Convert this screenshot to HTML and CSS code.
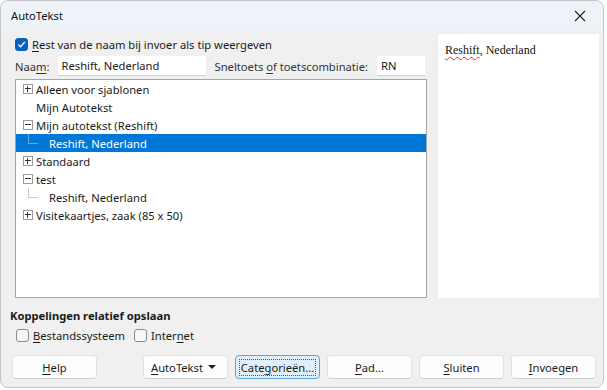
FILE: index.html
```html
<!DOCTYPE html>
<html lang="nl">
<head>
    <meta charset="UTF-8">
    <title>AutoTekst</title>
    <link rel="stylesheet" href="styles.css">
</head>
<body>

    <!-- Dialog window -->
    <div class="dialog">
        <div class="titlebar">
            <span class="title">AutoTekst</span>
            <svg class="close" width="12" height="12" viewBox="0 0 12 12">
                <path d="M1 1 L11 11 M11 1 L1 11" stroke="#222" stroke-width="1.1" fill="none"/>
            </svg>
        </div>

        <div class="main">
            <div class="left">
                <label class="check-row">
                    <span class="checkbox checked">
                        <svg width="9" height="9" viewBox="0 0 9 9"><path d="M1.2 4.6 L3.5 6.8 L7.8 2" stroke="#fff" stroke-width="1.3" fill="none"/></svg>
                    </span>
                    <span><u>R</u>est van de naam bij invoer als tip weergeven</span>
                </label>

                <div class="name-row">
                    <span class="lbl">Naa<u>m</u>:</span>
                    <div class="field name-field">Reshift, Nederland</div>
                    <span class="lbl shortcut-lbl">Sneltoets <u>o</u>f toetscombinatie:</span>
                    <div class="field key-field">RN</div>
                </div>

                <div class="tree">
                    <div class="node"><span class="expander plus"></span>Alleen voor sjablonen</div>
                    <div class="node"><span class="expander none"></span>Mijn Autotekst</div>
                    <div class="node"><span class="expander minus"></span>Mijn autotekst (Reshift)</div>
                    <div class="node child selected"><span class="branch"></span>Reshift, Nederland</div>
                    <div class="node"><span class="expander plus"></span>Standaard</div>
                    <div class="node"><span class="expander minus"></span>test</div>
                    <div class="node child"><span class="branch"></span>Reshift, Nederland</div>
                    <div class="node"><span class="expander plus"></span>Visitekaartjes, zaak (85 x 50)</div>
                </div>
            </div>

            <div class="preview">
                <span class="spell">Reshift</span>, Nederland
            </div>
        </div>

        <div class="links">
            <div class="section-title">Koppelingen relatief opslaan</div>
            <div class="links-row">
                <label class="check-row"><span class="checkbox"></span><span><u>B</u>estandssysteem</span></label>
                <label class="check-row"><span class="checkbox"></span><span>Inter<u>n</u>et</span></label>
            </div>
        </div>

        <div class="buttons">
            <button class="btn help"><u>H</u>elp</button>
            <button class="btn menu-btn"><span><u>A</u>utoTekst</span><span class="arrow"></span></button>
            <button class="btn focused"><span class="focus-ring">Cate<u>g</u>orieën...</span></button>
            <button class="btn"><u>P</u>ad...</button>
            <button class="btn"><u>S</u>luiten</button>
            <button class="btn"><u>I</u>nvoegen</button>
        </div>
    </div>

</body>
</html>
```

FILE: styles.css
```css
/* Reset */
* {
    margin: 0;
    padding: 0;
    box-sizing: border-box;
}

body {
    background: #fff;
    font-family: 'Noto Sans', 'Open Sans', sans-serif;
    font-size: 11.2px;
    color: #1a1a1a;
    width: 607px;
    height: 390px;
    overflow: hidden;
    white-space: nowrap;
}

u {
    text-decoration-thickness: 1px;
    text-underline-offset: 2px;
}

/* Window */
.dialog {
    width: 604px;
    height: 388px;
    background: #f0f0f0;
    border: 1px solid #c4c4c4;
    border-radius: 8px;
    overflow: hidden;
    display: flex;
    flex-direction: column;
}

.titlebar {
    height: 29px;
    flex-shrink: 0;
    background: #eef2f9;
    display: flex;
    align-items: center;
    justify-content: space-between;
    padding: 0 17px 0 10px;
}

.title {
    color: #111;
}

/* Top area */
.main {
    display: flex;
    padding: 4px 0 0 14px;
    gap: 11px;
}

.left {
    width: 412px;
    display: flex;
    flex-direction: column;
}

.check-row {
    display: flex;
    align-items: center;
    gap: 4px;
    height: 20px;
}

.checkbox {
    width: 13px;
    height: 13px;
    border: 1px solid #8a8a8a;
    border-radius: 3px;
    background: #f7f7f7;
    display: flex;
    align-items: center;
    justify-content: center;
    flex-shrink: 0;
}

.checkbox.checked {
    background: #0a5fc0;
    border-color: #0a5fc0;
}

.name-row {
    display: flex;
    align-items: center;
    height: 20px;
    margin-top: 2px;
}

.lbl {
    color: #333;
}

.field {
    background: #fff;
    height: 20px;
    line-height: 19px;
    padding: 0 4px;
    border-bottom: 1px solid #d6d6d6;
    color: #1a1a1a;
}

.name-field {
    width: 148px;
    margin-left: 8px;
}

.shortcut-lbl {
    margin-left: 9px;
}

.key-field {
    width: 48px;
    margin-left: 9px;
}

/* Tree */
.tree {
    margin-top: 3px;
    height: 219px;
    background: #fff;
    border: 1px solid #a6a6a6;
}

.node {
    height: 18px;
    display: flex;
    align-items: center;
    padding-left: 7px;
    color: #1a1a1a;
    position: relative;
}

.node.selected {
    background: #0078d7;
    color: #fff;
}

.expander {
    width: 10px;
    height: 10px;
    margin-right: 3px;
    border: 1px solid #9a9a9a;
    position: relative;
    flex-shrink: 0;
}

.expander.none {
    border-color: transparent;
}

.expander.plus::before,
.expander.minus::before {
    content: "";
    position: absolute;
    left: 1px;
    top: 3px;
    width: 6px;
    height: 1px;
    background: #333;
}

.expander.plus::after {
    content: "";
    position: absolute;
    left: 3px;
    top: 1px;
    width: 1px;
    height: 6px;
    background: #333;
}

.node.child {
    padding-left: 33px;
}

.branch {
    position: absolute;
    left: 12px;
    top: 0;
    width: 10px;
    height: 10px;
    border-left: 1px solid #c8c8c8;
    border-bottom: 1px solid #c8c8c8;
}

.selected .branch {
    border-color: #6aa8e0;
}

/* Preview */
.preview {
    width: 161px;
    height: 264px;
    background: #fff;
    font-family: 'Liberation Serif', serif;
    font-size: 12px;
    color: #111;
    padding: 9px 7px;
}

.spell {
    text-decoration: underline wavy #d33;
    text-decoration-thickness: 1px;
    text-underline-offset: 2px;
}

/* Links section */
.links {
    padding: 9px 0 0 9px;
}

.section-title {
    font-weight: bold;
    font-size: 11.2px;
    color: #1a1a1a;
    height: 18px;
    line-height: 18px;
}

.links-row {
    display: flex;
    gap: 9px;
    padding-left: 6px;
}

/* Buttons */
.buttons {
    display: flex;
    gap: 7px;
    padding: 0 0 0 11px;
    margin-top: 10px;
}

.btn {
    width: 85px;
    height: 24px;
    font-family: inherit;
    font-size: 11.2px;
    color: #1a1a1a;
    background: #fdfdfd;
    border: 1px solid #e2e2e2;
    border-bottom-color: #cfcfcf;
    border-radius: 4px;
    display: flex;
    align-items: center;
    justify-content: center;
}

.help {
    margin-right: 39px;
}

.menu-btn {
    justify-content: space-between;
    padding: 0 11px 0 7px;
}

.arrow {
    width: 0;
    height: 0;
    border-left: 4px solid transparent;
    border-right: 4px solid transparent;
    border-top: 4px solid #222;
}

.focused {
    background: #e1effa;
    border-color: #5fa3dc;
}

.focus-ring {
    border: 1px dotted #555;
    padding: 0 1px;
    line-height: 15px;
}
```
